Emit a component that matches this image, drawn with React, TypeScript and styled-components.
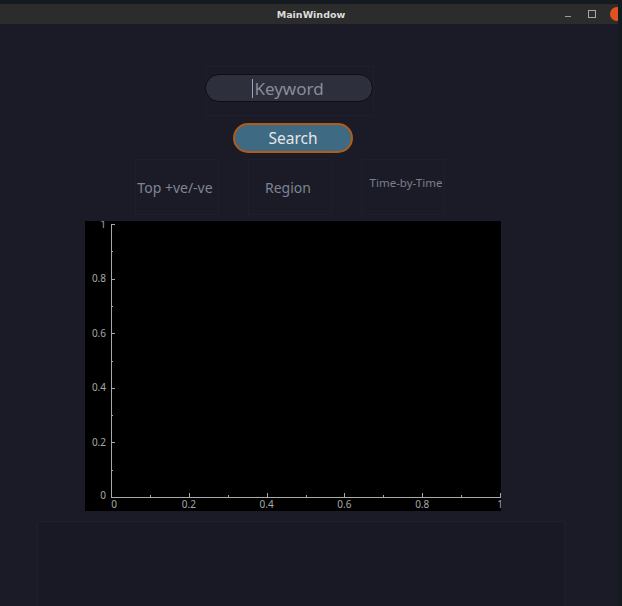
import React from "react";
import styled, { createGlobalStyle } from "styled-components";

const Global = createGlobalStyle`
  html, body { margin: 0; padding: 0; background: #141a20; }
  body { width: 622px; height: 606px; overflow: hidden; font-family: "Noto Sans", "DejaVu Sans", sans-serif; }
`;

const Screen = styled.div`
  width: 622px;
  height: 606px;
  display: flex;
  flex-direction: column;
  padding-top: 4px;
  box-sizing: border-box;
  background: #141a20;
`;

const Window = styled.div`
  width: 618px;
  flex: 1;
  display: flex;
  flex-direction: column;
  background: #1b1b27;
  overflow: hidden;
`;

const TitleBar = styled.div`
  height: 20px;
  background: #2c2c2c;
  display: flex;
  align-items: center;
  justify-content: center;
  position: relative;
  flex-shrink: 0;
`;

const Title = styled.span`
  font-family: "DejaVu Sans", sans-serif;
  font-weight: bold;
  font-size: 9.5px;
  color: #dcdcdc;
  margin-left: 4px;
`;

const Controls = styled.div`
  position: absolute;
  right: 0;
  top: 0;
  height: 20px;
  display: flex;
  align-items: center;
`;

const Minimize = styled.div`
  width: 6px;
  height: 1px;
  background: #9a9a9a;
  margin-top: 4px;
  margin-right: 17px;
`;

const Maximize = styled.div`
  width: 6px;
  height: 6px;
  border: 1px solid #a8a8a8;
  margin-right: 14px;
`;

const Close = styled.div`
  width: 14px;
  height: 14px;
  border-radius: 50%;
  background: #e0531f;
  margin-right: -6px;
`;

const Content = styled.div`
  flex: 1;
  display: flex;
  flex-direction: column;
  padding-top: 42px;
`;

const InputFrame = styled.div`
  width: 168px;
  height: 50px;
  margin-left: 206px;
  border: 1px solid #1f1f2b;
  box-sizing: border-box;
  padding-top: 7px;
  display: flex;
  justify-content: flex-start;
`;

const KeywordInput = styled.div`
  width: 169px;
  height: 28px;
  margin-left: -2px;
  box-sizing: border-box;
  border: 1.5px solid #0c0c12;
  border-radius: 14px;
  background: #2d2f3d;
  display: flex;
  align-items: center;
  justify-content: center;
  padding-right: 2px;
  font-size: 17px;
  color: #8a8d99;
`;

const Caret = styled.span`
  display: inline-block;
  width: 1px;
  height: 19px;
  background: #a0a3ad;
  margin-right: 1px;
`;

const SearchButton = styled.div`
  width: 120px;
  height: 30px;
  margin-left: 233px;
  margin-top: 7px;
  box-sizing: border-box;
  border: 2px solid #b35b18;
  border-radius: 15px;
  background: #3e6a83;
  display: flex;
  align-items: center;
  justify-content: center;
  font-size: 15.5px;
  color: #e6e6e6;
`;

const Tabs = styled.div`
  display: flex;
  gap: 29px;
  margin-left: 135px;
  margin-top: 6px;
`;

const Tab = styled.div<{ $small?: boolean }>`
  width: 84px;
  height: 56px;
  box-sizing: border-box;
  border: 1px solid #1f1f2b;
  display: flex;
  align-items: ${(p) => (p.$small ? "flex-start" : "center")};
  justify-content: center;
  padding-top: ${(p) => (p.$small ? "15px" : "0")};
  padding-left: ${(p) => (p.$small ? "6px" : "0")};
  padding-right: ${(p) => (p.$small ? "0" : "4px")};
  font-size: ${(p) => (p.$small ? "11.5px" : "14px")};
  color: ${(p) => (p.$small ? "#7a7e8c" : "#7f8492")};
  white-space: nowrap;
`;

const PlotArea = styled.div`
  width: 416px;
  height: 290px;
  margin-left: 85px;
  margin-top: 6px;
  background: #000;
`;

const BottomPanel = styled.div`
  width: 528px;
  flex: 1;
  margin-left: 37px;
  margin-top: 10px;
  box-sizing: border-box;
  border: 1px solid #20202c;
  border-bottom: none;
  background: #191925;
`;

const X0 = 26, X1 = 415, Y0 = 276, Y1 = 3;
const xs = (v: number) => X0 + (X1 - X0) * v;
const ys = (v: number) => Y0 - (Y0 - Y1) * v;

const Chart: React.FC = () => {
  const minor = Array.from({ length: 11 }, (_, i) => i / 10);
  const major = [0, 0.2, 0.4, 0.6, 0.8, 1];
  return (
    <svg width={416} height={290} style={{ display: "block" }}>
      <g stroke="#a9a9a9" strokeWidth={1} shapeRendering="crispEdges">
        <line x1={X0 + 0.5} y1={Y1} x2={X0 + 0.5} y2={Y0 + 0.5} />
        <line x1={X0} y1={Y0 + 0.5} x2={X1 + 1} y2={Y0 + 0.5} />
        {minor.map((v) => (
          <line key={"xt" + v} x1={Math.round(xs(v)) + 0.5} y1={Y0} x2={Math.round(xs(v)) + 0.5} y2={Y0 - (major.includes(v) ? 4 : 2)} />
        ))}
        {minor.map((v) => (
          <line key={"yt" + v} x1={X0} y1={Math.round(ys(v)) + 0.5} x2={X0 + (major.includes(v) ? 4 : 2)} y2={Math.round(ys(v)) + 0.5} />
        ))}
        <line x1={X0} y1={Y1 + 0.5} x2={X0 + 4} y2={Y1 + 0.5} />
      </g>
      <g fill="#a8a8a8" fontFamily="'Noto Sans', 'DejaVu Sans', sans-serif" fontSize={10}>
        {major.map((v) => (
          <text key={"yl" + v} x={21} y={ys(v) + (v === 0 ? 2 : 3.5)} textAnchor="end">
            {v === 0 ? "0" : v === 1 ? "1" : v.toFixed(1)}
          </text>
        ))}
        {major.map((v) => (
          <text key={"xl" + v} x={v === 0 ? xs(v) + 3 : xs(v)} y={287} textAnchor="middle">
            {v === 0 ? "0" : v === 1 ? "1" : v.toFixed(1)}
          </text>
        ))}
      </g>
    </svg>
  );
};

export default function App() {
  return (
    <>
      <Global />
      <Screen>
        <Window>
          <TitleBar>
            <Title>MainWindow</Title>
            <Controls>
              <Minimize />
              <Maximize />
              <Close />
            </Controls>
          </TitleBar>
          <Content>
            <InputFrame>
              <KeywordInput>
                <Caret />
                Keyword
              </KeywordInput>
            </InputFrame>
            <SearchButton>Search</SearchButton>
            <Tabs>
              <Tab>Top +ve/-ve</Tab>
              <Tab>Region</Tab>
              <Tab $small>Time-by-Time</Tab>
            </Tabs>
            <PlotArea>
              <Chart />
            </PlotArea>
            <BottomPanel />
          </Content>
        </Window>
      </Screen>
    </>
  );
}
